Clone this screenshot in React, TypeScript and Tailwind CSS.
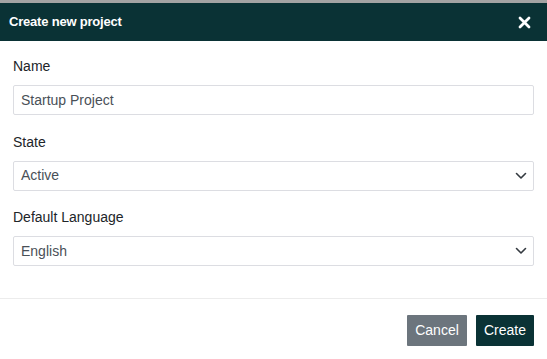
import React from "react";

const Chevron = () => (
  <svg width="12" height="8" viewBox="0 0 12 8" className="absolute right-[6px] top-1/2 -translate-y-1/2" fill="none">
    <path d="M1.5 1.5 L6 6 L10.5 1.5" stroke="#343a40" strokeWidth="1.6" strokeLinecap="round" strokeLinejoin="round" />
  </svg>
);

function Field({ label, value, select }: { label: string; value: string; select?: boolean }) {
  return (
    <div className="flex flex-col">
      <div className="h-[21px] leading-[21px] text-[14px] text-[#212529] mb-[8px]">{label}</div>
      <div className="relative h-[30px] border border-[#dcdde2] rounded-[2px] bg-white flex items-center pl-[7px] text-[14px] text-[#495057]">
        {value}
        {select && <Chevron />}
      </div>
    </div>
  );
}

export default function App() {
  return (
    <div className="w-[547px] h-[359px] bg-white overflow-hidden" style={{ fontFamily: '"Liberation Sans", Arial, sans-serif' }}>
      <div className="h-[3px] bg-[#a3a3a3]" />
      <div className="h-[38px] bg-[#0a3235] flex items-center justify-between pl-[9px] pr-[16px]">
        <span className="text-white font-bold text-[13px] tracking-[-0.2px]">Create new project</span>
        <svg width="13" height="13" viewBox="0 0 13 13">
          <path d="M2 2 L11 11 M11 2 L2 11" stroke="white" strokeWidth="2.8" strokeLinecap="round" />
        </svg>
      </div>
      <div className="px-[13px] pt-[15px] flex flex-col gap-[16.5px]">
        <Field label="Name" value="Startup Project" />
        <Field label="State" value="Active" select />
        <Field label="Default Language" value="English" select />
      </div>
      <div className="mt-[32px] h-[1px] bg-[#ececec]" />
      <div className="flex justify-end gap-[9px] pr-[13px] pt-[16px]">
        <button className="h-[31px] w-[60px] bg-[#6c757d] text-white text-[14px] rounded-[1px]">Cancel</button>
        <button className="h-[31px] w-[58px] bg-[#0a3235] text-white text-[14px] rounded-[1px]">Create</button>
      </div>
    </div>
  );
}
